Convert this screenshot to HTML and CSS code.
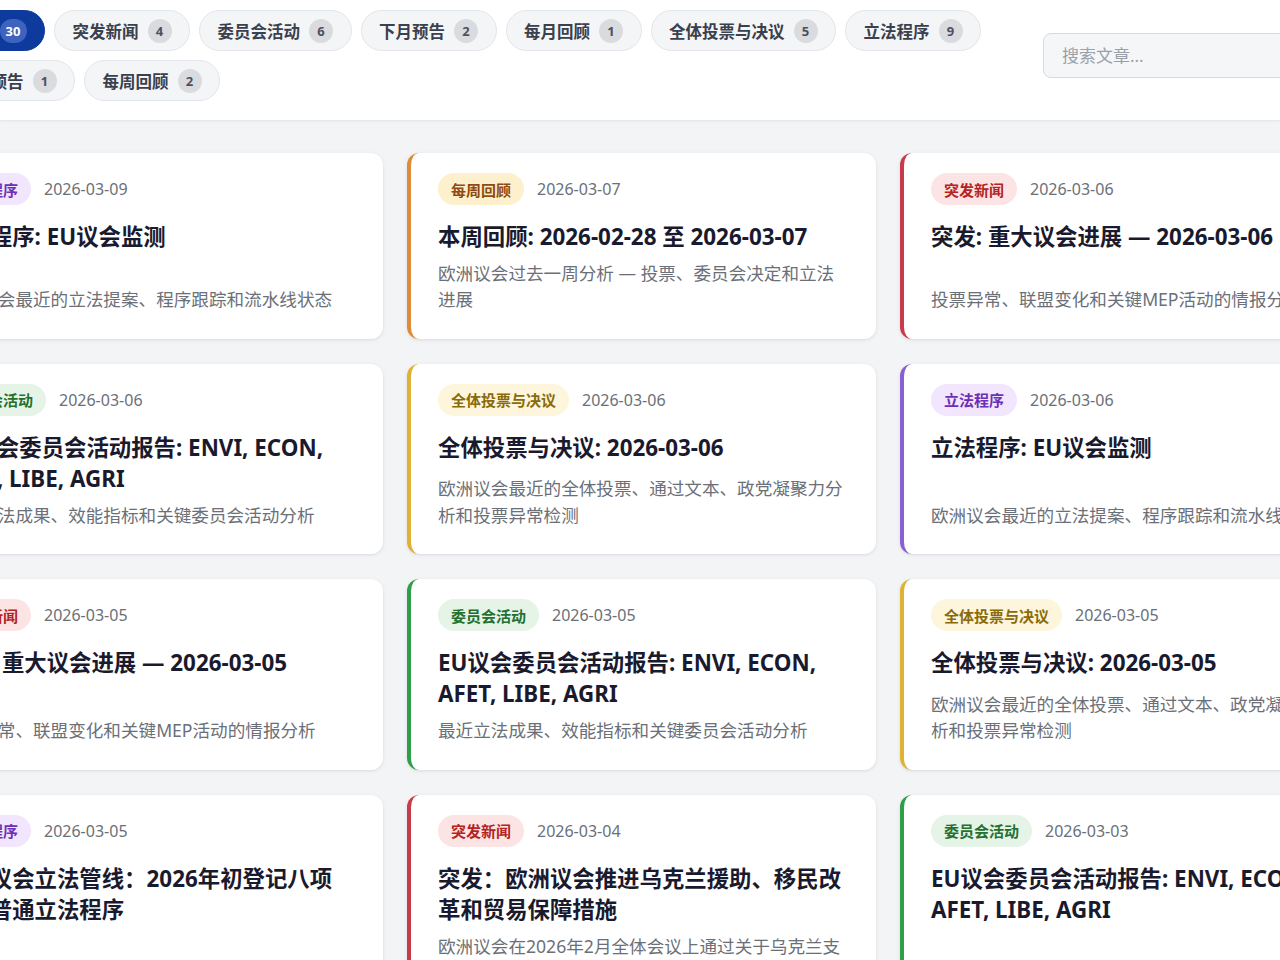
FILE: index.html
```html
<!DOCTYPE html>
<html lang="zh-CN">
<head>
<meta charset="utf-8">
<title>欧洲议会新闻</title>
<link rel="stylesheet" href="styles.css">
</head>
<body>
<header class="topbar">
  <div class="topbar-inner">
    <nav class="filters">
      <button class="chip chip-active">全部 <span class="count">30</span></button>
      <button class="chip">突发新闻 <span class="count">4</span></button>
      <button class="chip">委员会活动 <span class="count">6</span></button>
      <button class="chip">下月预告 <span class="count">2</span></button>
      <button class="chip">每月回顾 <span class="count">1</span></button>
      <button class="chip">全体投票与决议 <span class="count">5</span></button>
      <button class="chip">立法程序 <span class="count">9</span></button>
      <button class="chip">下周预告 <span class="count">1</span></button>
      <button class="chip">每周回顾 <span class="count">2</span></button>
    </nav>
    <input class="search" type="text" placeholder="搜索文章...">
  </div>
</header>

<main class="grid">
  <article class="card c-leg">
    <div class="meta"><span class="badge">立法程序</span><span class="date">2026-03-09</span></div>
    <h2 class="title">立法程序: EU议会监测</h2>
    <p class="excerpt">欧洲议会最近的立法提案、程序跟踪和流水线状态</p>
  </article>
  <article class="card c-week">
    <div class="meta"><span class="badge">每周回顾</span><span class="date">2026-03-07</span></div>
    <h2 class="title">本周回顾: 2026-02-28 至 2026-03-07</h2>
    <p class="excerpt">欧洲议会过去一周分析 — 投票、委员会决定和立法进展</p>
  </article>
  <article class="card c-break">
    <div class="meta"><span class="badge">突发新闻</span><span class="date">2026-03-06</span></div>
    <h2 class="title">突发: 重大议会进展 — 2026-03-06</h2>
    <p class="excerpt">投票异常、联盟变化和关键MEP活动的情报分析</p>
  </article>

  <article class="card c-comm">
    <div class="meta"><span class="badge">委员会活动</span><span class="date">2026-03-06</span></div>
    <h2 class="title">EU议会委员会活动报告: ENVI, ECON, AFET, LIBE, AGRI</h2>
    <p class="excerpt">最近立法成果、效能指标和关键委员会活动分析</p>
  </article>
  <article class="card c-vote">
    <div class="meta"><span class="badge">全体投票与决议</span><span class="date">2026-03-06</span></div>
    <h2 class="title">全体投票与决议: 2026-03-06</h2>
    <p class="excerpt">欧洲议会最近的全体投票、通过文本、政党凝聚力分析和投票异常检测</p>
  </article>
  <article class="card c-leg">
    <div class="meta"><span class="badge">立法程序</span><span class="date">2026-03-06</span></div>
    <h2 class="title">立法程序: EU议会监测</h2>
    <p class="excerpt">欧洲议会最近的立法提案、程序跟踪和流水线状态</p>
  </article>

  <article class="card c-break">
    <div class="meta"><span class="badge">突发新闻</span><span class="date">2026-03-05</span></div>
    <h2 class="title">突发: 重大议会进展 — 2026-03-05</h2>
    <p class="excerpt">投票异常、联盟变化和关键MEP活动的情报分析</p>
  </article>
  <article class="card c-comm">
    <div class="meta"><span class="badge">委员会活动</span><span class="date">2026-03-05</span></div>
    <h2 class="title">EU议会委员会活动报告: ENVI, ECON, AFET, LIBE, AGRI</h2>
    <p class="excerpt">最近立法成果、效能指标和关键委员会活动分析</p>
  </article>
  <article class="card c-vote">
    <div class="meta"><span class="badge">全体投票与决议</span><span class="date">2026-03-05</span></div>
    <h2 class="title">全体投票与决议: 2026-03-05</h2>
    <p class="excerpt">欧洲议会最近的全体投票、通过文本、政党凝聚力分析和投票异常检测</p>
  </article>

  <article class="card c-leg">
    <div class="meta"><span class="badge">立法程序</span><span class="date">2026-03-05</span></div>
    <h2 class="title">欧洲议会立法管线：2026年初登记八项新的普通立法程序</h2>
    <p class="excerpt">欧洲议会立法管线概览与程序进展跟踪</p>
  </article>
  <article class="card c-break">
    <div class="meta"><span class="badge">突发新闻</span><span class="date">2026-03-04</span></div>
    <h2 class="title">突发：欧洲议会推进乌克兰援助、移民改革和贸易保障措施</h2>
    <p class="excerpt">欧洲议会在2026年2月全体会议上通过关于乌克兰支持、移民改革和贸易保障的重要立法措施</p>
  </article>
  <article class="card c-comm">
    <div class="meta"><span class="badge">委员会活动</span><span class="date">2026-03-03</span></div>
    <h2 class="title">EU议会委员会活动报告: ENVI, ECON, AFET, LIBE, AGRI</h2>
    <p class="excerpt">最近立法成果、效能指标和关键委员会活动分析</p>
  </article>
</main>
</body>
</html>
```

FILE: styles.css
```css
html, body {
  margin: 0;
  padding: 0;
}

body {
  background: #f3f4f6;
  font-family: "Noto Sans", "Noto Sans CJK SC", sans-serif;
  color: #1a1a2e;
  overflow: hidden;
  width: 1280px;
  height: 960px;
}

.topbar {
  background: #ffffff;
  border-bottom: 1px solid #e6e8ec;
  box-shadow: 0 1px 3px rgba(0, 0, 0, 0.04);
}

.topbar-inner {
  display: flex;
  align-items: center;
  gap: 24px;
  margin-left: -61px;
  width: 1440px;
  padding: 10px 0 19px;
  box-sizing: border-box;
}

.filters {
  display: flex;
  flex-wrap: wrap;
  gap: 9px 9px;
  width: 1080px;
  flex: none;
}

.chip {
  display: inline-flex;
  align-items: center;
  gap: 9px;
  height: 41px;
  box-sizing: border-box;
  padding: 0 17.5px;
  border: 1px solid #e2e5ea;
  border-radius: 999px;
  background: #f4f5f7;
  font-family: inherit;
  font-size: 16.5px;
  font-weight: 600;
  color: #3a404d;
  white-space: nowrap;
}

.count {
  display: inline-flex;
  align-items: center;
  justify-content: center;
  min-width: 24px;
  height: 24px;
  padding: 0 4px;
  box-sizing: border-box;
  border-radius: 12px;
  background: #d9dbdf;
  color: #4b5160;
  font-size: 13px;
  font-weight: 700;
}

.chip-active {
  background: #0d3a9c;
  border-color: #0d3a9c;
  color: #ffffff;
}

.chip-active .count {
  background: #3d62bf;
  color: #ffffff;
  min-width: 27px;
}

.search {
  flex: none;
  width: 300px;
  height: 45px;
  box-sizing: border-box;
  padding: 0 18px;
  border: 1px solid #d7dadf;
  border-radius: 8px;
  background: #f5f6f8;
  font-family: inherit;
  font-size: 17px;
  color: #374151;
}

.search::placeholder {
  color: #9aa0aa;
}

.grid {
  display: grid;
  grid-template-columns: repeat(3, 469px);
  gap: 25px 24px;
  margin: 32px 0 0 -86px;
}

.card {
  display: flex;
  flex-direction: column;
  background: #ffffff;
  border-radius: 12px;
  border-left: 4px solid #ccc;
  padding: 20px 30px 26px 27px;
  box-shadow: 0 1px 4px rgba(15, 23, 42, 0.08), 0 1px 2px rgba(15, 23, 42, 0.04);
}

.meta {
  display: flex;
  align-items: center;
  gap: 13px;
  margin-bottom: 16px;
}

.badge {
  display: inline-flex;
  align-items: center;
  height: 32px;
  padding: 0 13px;
  border-radius: 16px;
  font-size: 15px;
  font-weight: 700;
  white-space: nowrap;
}

.date {
  font-size: 16px;
  color: #6b7078;
}

.title {
  margin: 0 0 8px;
  font-size: 22.4px;
  line-height: 31px;
  font-weight: 700;
  color: #1a1a2e;
}

.excerpt {
  margin: auto 0 0;
  font-size: 17.6px;
  line-height: 26.4px;
  color: #6b7078;
}

.c-leg { border-left-color: #8a5fd1; }
.c-leg .badge { background: #f1e6fd; color: #6d2fb5; }

.c-week { border-left-color: #e08b3a; }
.c-week .badge { background: #fdf0cc; color: #8f4a12; }

.c-break { border-left-color: #c93b4a; }
.c-break .badge { background: #fde4e4; color: #b42323; }

.c-comm { border-left-color: #2f9e48; }
.c-comm .badge { background: #e6f4e8; color: #23702f; }

.c-vote { border-left-color: #e0b233; }
.c-vote .badge { background: #fdf6dc; color: #8a6a0a; }
```
